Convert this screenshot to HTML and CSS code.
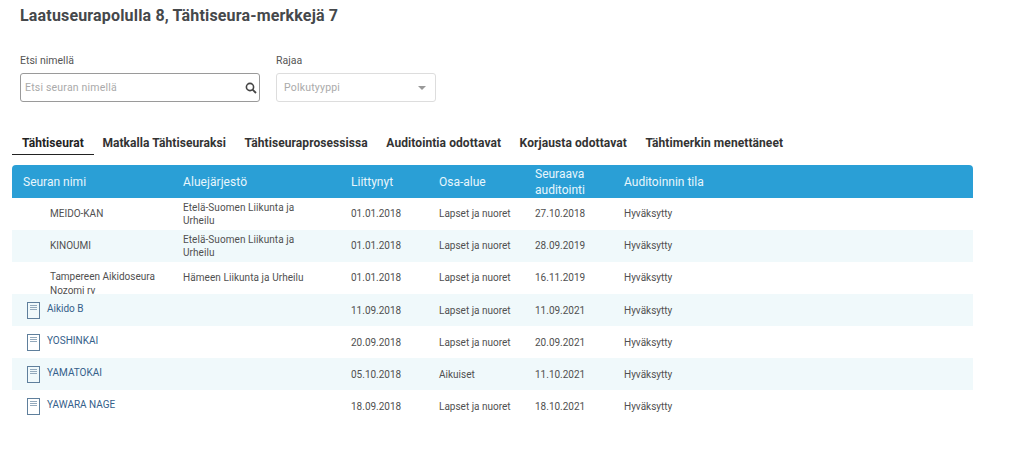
FILE: index.html
```html
<!DOCTYPE html>
<html lang="en">
<head>
    <meta charset="UTF-8">
    <title>Laatuseurapolulla</title>
    <link rel="stylesheet" href="styles.css">
</head>
<body>
    <div class="page">
        <h1 class="title">Laatuseurapolulla 8, Tähtiseura-merkkejä 7</h1>
        <div class="filters">
            <div class="field field-search">
                <label class="field-label">Etsi nimellä</label>
                <div class="input input-search">
                    <span class="placeholder">Etsi seuran nimellä</span>
                    <svg class="search-icon" width="12" height="12" viewBox="0 0 12 12">
                        <circle cx="5" cy="5" r="3.6" fill="none" stroke="#444" stroke-width="1.6"/>
                        <path d="M7.6 7.6 L11 11" stroke="#444" stroke-width="1.8"/>
                    </svg>
                </div>
            </div>
            <div class="field field-select">
                <label class="field-label">Rajaa</label>
                <div class="input input-select">
                    <span class="placeholder">Polkutyyppi</span>
                    <span class="caret"></span>
                </div>
            </div>
        </div>
        <div class="tabs">
            <a class="tab active">Tähtiseurat</a>
            <a class="tab">Matkalla Tähtiseuraksi</a>
            <a class="tab">Tähtiseuraprosessissa</a>
            <a class="tab">Auditointia odottavat</a>
            <a class="tab">Korjausta odottavat</a>
            <a class="tab">Tähtimerkin menettäneet</a>
        </div>
        <div class="table">
            <div class="row head">
                <div class="name">Seuran nimi</div>
                <div>Aluejärjestö</div>
                <div>Liittynyt</div>
                <div>Osa-alue</div>
                <div>Seuraava auditointi</div>
                <div>Auditoinnin tila</div>
            </div>
            <div class="row">
                <div class="name plain">MEIDO-KAN</div>
                <div>Etelä-Suomen Liikunta ja Urheilu</div>
                <div>01.01.2018</div>
                <div>Lapset ja nuoret</div>
                <div>27.10.2018</div>
                <div>Hyväksytty</div>
            </div>
            <div class="row">
                <div class="name plain">KINOUMI</div>
                <div>Etelä-Suomen Liikunta ja Urheilu</div>
                <div>01.01.2018</div>
                <div>Lapset ja nuoret</div>
                <div>28.09.2019</div>
                <div>Hyväksytty</div>
            </div>
            <div class="row">
                <div class="name plain clip">Tampereen Aikidoseura Nozomi rv</div>
                <div>Hämeen Liikunta ja Urheilu</div>
                <div>01.01.2018</div>
                <div>Lapset ja nuoret</div>
                <div>16.11.2019</div>
                <div>Hyväksytty</div>
            </div>
            <div class="row">
                <div class="name linked">
                    <svg class="doc-icon" width="13" height="17" viewBox="0 0 13 17"><rect x="0.5" y="0.5" width="12" height="16" fill="none" stroke="#5f7f9c"/><path d="M3 3.5H10M3 5.5H10M3 7.5H10" stroke="#93a9bc"/></svg>
                    <a>Aikido B</a>
                </div>
                <div></div>
                <div>11.09.2018</div>
                <div>Lapset ja nuoret</div>
                <div>11.09.2021</div>
                <div>Hyväksytty</div>
            </div>
            <div class="row">
                <div class="name linked">
                    <svg class="doc-icon" width="13" height="17" viewBox="0 0 13 17"><rect x="0.5" y="0.5" width="12" height="16" fill="none" stroke="#5f7f9c"/><path d="M3 3.5H10M3 5.5H10M3 7.5H10" stroke="#93a9bc"/></svg>
                    <a>YOSHINKAI</a>
                </div>
                <div></div>
                <div>20.09.2018</div>
                <div>Lapset ja nuoret</div>
                <div>20.09.2021</div>
                <div>Hyväksytty</div>
            </div>
            <div class="row">
                <div class="name linked">
                    <svg class="doc-icon" width="13" height="17" viewBox="0 0 13 17"><rect x="0.5" y="0.5" width="12" height="16" fill="none" stroke="#5f7f9c"/><path d="M3 3.5H10M3 5.5H10M3 7.5H10" stroke="#93a9bc"/></svg>
                    <a>YAMATOKAI</a>
                </div>
                <div></div>
                <div>05.10.2018</div>
                <div>Aikuiset</div>
                <div>11.10.2021</div>
                <div>Hyväksytty</div>
            </div>
            <div class="row">
                <div class="name linked">
                    <svg class="doc-icon" width="13" height="17" viewBox="0 0 13 17"><rect x="0.5" y="0.5" width="12" height="16" fill="none" stroke="#5f7f9c"/><path d="M3 3.5H10M3 5.5H10M3 7.5H10" stroke="#93a9bc"/></svg>
                    <a>YAWARA NAGE</a>
                </div>
                <div></div>
                <div>18.09.2018</div>
                <div>Lapset ja nuoret</div>
                <div>18.10.2021</div>
                <div>Hyväksytty</div>
            </div>
        </div>
    </div>
</body>
</html>
```

FILE: styles.css
```css
body {
    margin: 0;
    font-family: 'Roboto', 'Liberation Sans', sans-serif;
    background: #fff;
    color: #444;
    overflow: hidden;
}
.page {
    padding: 6px 50px 0 12px;
}
.title {
    margin: 0 0 0 8px;
    font-size: 16px;
    line-height: 20px;
    font-weight: 700;
    letter-spacing: 0.17px;
    color: #45484b;
}
.filters {
    display: flex;
    margin: 28px 0 0 8px;
    gap: 16px;
}
.field-search {
    width: 240px;
}
.field-select {
    width: 160px;
}
.field-label {
    display: block;
    font-size: 10.5px;
    line-height: 14px;
    margin-bottom: 5px;
    color: #555;
}
.input {
    height: 27px;
    display: flex;
    align-items: center;
    justify-content: space-between;
    border-radius: 3px;
    font-size: 10.5px;
}
.input-search {
    border: 1px solid #9a9a9a;
    padding: 0 2px 0 4px;
}
.input-select {
    border: 1px solid #ddd;
    padding: 0 9px 0 7px;
}
.placeholder {
    color: #aaa;
    letter-spacing: 0.2px;
}
.caret {
    width: 0;
    height: 0;
    border-left: 4px solid transparent;
    border-right: 4px solid transparent;
    border-top: 4px solid #999;
}
.tabs {
    display: flex;
    margin-top: 30px;
}
.tab {
    padding: 0 10px;
    margin-right: -1.5px;
    font-size: 12px;
    line-height: 22px;
    height: 22px;
    font-weight: 700;
    letter-spacing: 0.08px;
    color: #333;
    border-bottom: 1px solid transparent;
}
.tab.active {
    border-bottom-color: #222;
    color: #222;
}
.table {
    margin-top: 10px;
    width: 961px;
    font-size: 10px;
}
.row {
    display: grid;
    grid-template-columns: 160px 168px 88px 96px 89px 1fr;
    height: 32px;
    align-items: center;
    line-height: 13.5px;
    color: #505050;
}
.row > div {
    padding-right: 10px;
    padding-left: 11px;
}
.row > div:nth-child(2) {
    padding-right: 30px;
    letter-spacing: 0.07px;
}
.row:nth-child(n+5) > div:nth-child(n+3) {
    padding-top: 2px;
}
.row:nth-child(odd) {
    background: #f0f9fb;
}
.row.head {
    height: 33px;
    background: #2a9fd6;
    color: #e8f6fc;
    border-radius: 4px 4px 0 0;
    font-size: 12px;
    line-height: 16px;
}
.name.plain {
    padding-left: 38px;
}
.clip {
    align-self: start;
    padding-top: 8px;
    height: 24px;
    overflow: hidden;
}
.name.linked {
    display: flex;
    align-items: center;
    gap: 7px;
    padding-left: 15px;
    color: #35608a;
}
.name.linked a {
    margin-top: -3px;
}
.doc-icon {
    flex: none;
}
```
